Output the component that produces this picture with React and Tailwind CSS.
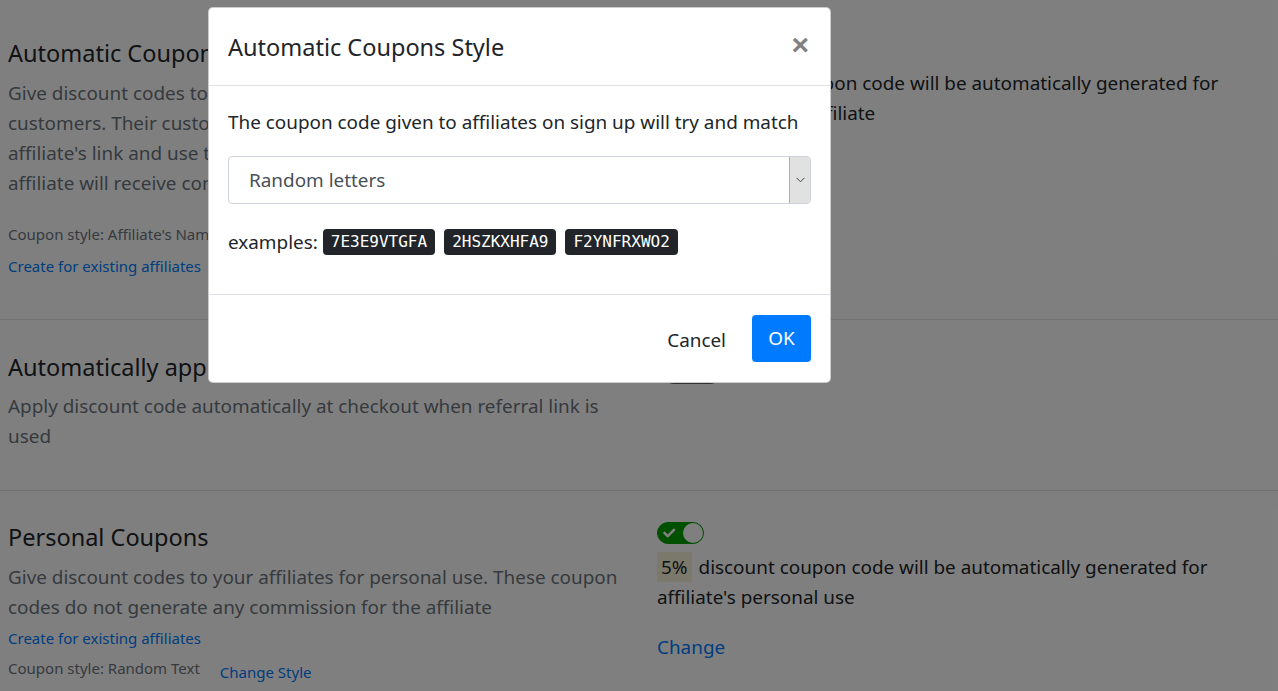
function Toggle({ on }) {
  if (on) {
    return (
      <div className="relative w-[47px] h-[22px] rounded-full bg-[#00a000] border border-[#00a000]">
        <svg className="absolute left-[5px] top-[5px]" width="13" height="10" viewBox="0 0 13 10">
          <path d="M1.5 5 L4.8 8.2 L11 1.8" fill="none" stroke="#ffffff" strokeWidth="2.6" strokeLinecap="round" strokeLinejoin="round" />
        </svg>
        <div className="absolute right-[0px] top-[0px] w-[20px] h-[20px] rounded-full bg-white"></div>
      </div>
    );
  }
  return (
    <div className="relative w-[62px] h-[26px] rounded-full bg-[#5f656b]">
      <div className="absolute left-[3px] top-[3px] w-[20px] h-[20px] rounded-full bg-white"></div>
    </div>
  );
}

function Pct({ v }) {
  return <span className="bg-[#f7f3d6] px-[4px] py-[2px] mr-[7px]">{v}</span>;
}

export default function App() {
  return (
    <div
      className="relative w-[1278px] h-[691px] overflow-hidden bg-white text-[#212529]"
      style={{ fontFamily: "'Noto Sans', 'Open Sans', sans-serif" }}
    >
      {/* Section 1 */}
      <div className="grid grid-cols-2 border-b border-[#dee2e6] h-[320px]">
        <div className="pl-[8px] pr-[14px] pt-[35px]">
          <h2 className="text-[23.5px] leading-[36px] font-normal mb-[7px]">Automatic Coupons</h2>
          <p className="text-[18.9px] leading-[30px] text-[#6c757d] whitespace-nowrap">
            Give discount codes to your affiliates to share with their
            <br />
            customers. Their customers don't need to click the
            <br />
            affiliate's link and use the coupon at checkout, the
            <br />
            affiliate will receive commission.
          </p>
          <div className="mt-[25px] text-[15px] leading-[22px] text-[#6c757d]">Coupon style: Affiliate's Name + discount</div>
          <div className="mt-[10px] text-[15px] leading-[22px] text-[#007bff]">Create for existing affiliates</div>
        </div>
        <div className="pl-[18px] pr-[21px] pt-[38px]">
          <Toggle on />
          <p className="mt-[8px] text-[18.9px] leading-[30px]">
            <Pct v="10%" />discount coupon code will be automatically generated for newly registered affiliate
          </p>
        </div>
      </div>

      {/* Section 2 */}
      <div className="grid grid-cols-2 border-b border-[#dee2e6] h-[171px]">
        <div className="pl-[8px] pr-[14px] pt-[29px]">
          <h2 className="text-[23.5px] leading-[36px] font-normal mb-[6px]">Automatically apply discount code</h2>
          <p className="text-[18.9px] leading-[30px] text-[#6c757d]">
            Apply discount code automatically at checkout when referral link is used
          </p>
        </div>
        <div className="pl-[22px] pr-[21px] pt-[38px]">
          <Toggle on={false} />
        </div>
      </div>

      {/* Section 3 */}
      <div className="grid grid-cols-2">
        <div className="pl-[8px] pr-[14px] pt-[28px]">
          <h2 className="text-[23.5px] leading-[36px] font-normal mb-[7px]">Personal Coupons</h2>
          <p className="text-[18.9px] leading-[30px] text-[#6c757d]">
            Give discount codes to your affiliates for personal use. These coupon codes do not generate any commission for the affiliate
          </p>
          <div className="mt-[5px] text-[15px] leading-[22px] text-[#007bff]">Create for existing affiliates</div>
          <div className="mt-[8px] flex items-start text-[15px] leading-[22px]">
            <span className="text-[#6c757d]">Coupon style: Random Text</span>
            <span className="ml-[20px] mt-[4px] text-[#007bff]">Change Style</span>
          </div>
        </div>
        <div className="pl-[18px] pr-[21px] pt-[31px]">
          <Toggle on />
          <p className="mt-[8px] text-[18.9px] leading-[30px]">
            <Pct v="5%" />discount coupon code will be automatically generated for affiliate's personal use
          </p>
          <div className="mt-[20px] text-[18.9px] leading-[30px] text-[#007bff]">Change</div>
        </div>
      </div>

      {/* Backdrop */}
      <div className="absolute inset-0 bg-black/50"></div>

      {/* Modal */}
      <div className="absolute left-[208px] top-[7px] w-[623px] bg-white rounded-[5px] border border-black/20">
        <div className="flex items-center justify-between h-[78px] px-[19px] border-b border-[#dee2e6]">
          <h5 className="text-[23.5px] leading-[36px] font-normal">Automatic Coupons Style</h5>
          <span className="text-[30px] leading-none font-bold text-[#808080] mr-[2px] mb-[4px]" style={{ fontFamily: "'Liberation Sans', Arial, sans-serif" }}>×</span>
        </div>
        <div className="px-[19px] pt-[21px] pb-[37px]">
          <p className="text-[18.9px] leading-[30px]">The coupon code given to affiliates on sign up will try and match</p>
          <div className="mt-[19px] h-[48px] flex items-stretch border border-[#ced4da] rounded-[4px]">
            <div className="flex-1 flex items-center pl-[20px] text-[18.9px] text-[#495057]">Random letters</div>
            <div className="w-[21px] bg-[#e1e1e1] border-l border-[#adadad] rounded-r-[3px] flex items-center justify-center">
              <svg width="9" height="6" viewBox="0 0 9 6">
                <path d="M0.5 0.8 L4.5 4.8 L8.5 0.8" fill="none" stroke="#444" strokeWidth="1" />
              </svg>
            </div>
          </div>
          <div className="mt-[23px] flex items-center text-[18.9px] leading-[30px]">
            <span className="mr-[5px]">examples:</span>
            {["7E3E9VTGFA", "2HSZKXHFA9", "F2YNFRXWO2"].map((c) => (
              <span
                key={c}
                className="mr-[9px] h-[26px] flex items-center px-[8px] rounded-[4px] bg-[#212529] text-white text-[16px]"
                style={{ fontFamily: "'DejaVu Sans Mono', 'Liberation Mono', monospace" }}
              >
                {c}
              </span>
            ))}
          </div>
        </div>
        <div className="flex items-center justify-end gap-[26px] border-t border-[#dee2e6] px-[19px] h-[88px]">
          <span className="text-[18.9px] mt-[3px]">Cancel</span>
          <button className="h-[47px] w-[59px] rounded-[4px] bg-[#007bff] text-white text-[18.9px]">OK</button>
        </div>
      </div>
    </div>
  );
}
